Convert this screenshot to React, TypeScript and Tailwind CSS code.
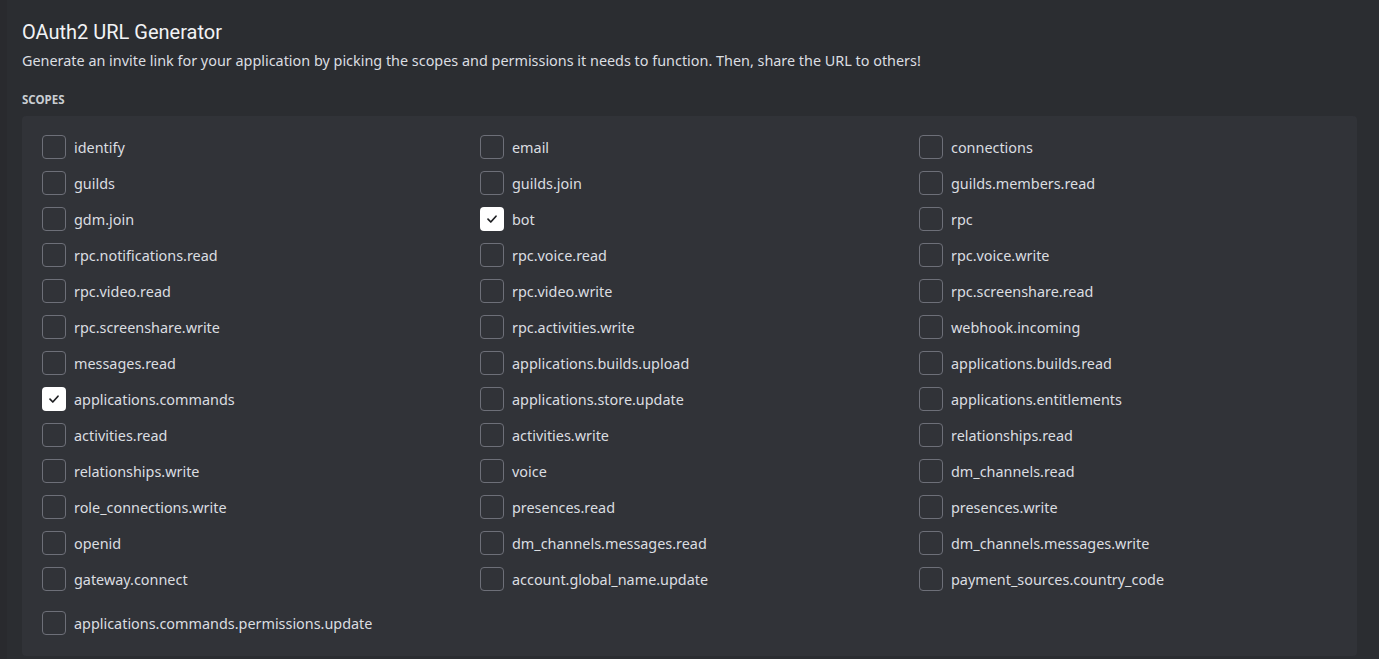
import React from "react";

const rows: string[][] = [
  ["identify", "email", "connections"],
  ["guilds", "guilds.join", "guilds.members.read"],
  ["gdm.join", "bot", "rpc"],
  ["rpc.notifications.read", "rpc.voice.read", "rpc.voice.write"],
  ["rpc.video.read", "rpc.video.write", "rpc.screenshare.read"],
  ["rpc.screenshare.write", "rpc.activities.write", "webhook.incoming"],
  ["messages.read", "applications.builds.upload", "applications.builds.read"],
  ["applications.commands", "applications.store.update", "applications.entitlements"],
  ["activities.read", "activities.write", "relationships.read"],
  ["relationships.write", "voice", "dm_channels.read"],
  ["role_connections.write", "presences.read", "presences.write"],
  ["openid", "dm_channels.messages.read", "dm_channels.messages.write"],
  ["gateway.connect", "account.global_name.update", "payment_sources.country_code"],
];

const checked = new Set(["bot", "applications.commands"]);

function Item({ label }: { label: string }) {
  const on = checked.has(label);
  return (
    <div className="flex items-center h-6 gap-2">
      {on ? (
        <div className="w-6 h-6 rounded-[4px] bg-white flex items-center justify-center shrink-0">
          <svg width="14" height="14" viewBox="0 0 14 14" fill="none">
            <path d="M3 7.2 L5.8 10 L11 4.2" stroke="#1e1f22" strokeWidth="1.7" strokeLinecap="round" strokeLinejoin="round" />
          </svg>
        </div>
      ) : (
        <div className="w-6 h-6 rounded-[4px] border border-[#6d6f78] shrink-0" />
      )}
      <span className="text-[14.4px] text-[#dbdee1] leading-6 pt-px">{label}</span>
    </div>
  );
}

export default function App() {
  return (
    <div
      className="w-[1379px] h-[659px] bg-[#2b2d31] overflow-hidden border-l-[7px] border-[#292a2e] pl-[15px] pr-[22px] pt-[20px]"
      style={{ fontFamily: '"Noto Sans", "Open Sans", sans-serif' }}
    >
      <h1
        className="text-[20px] leading-6 text-[#f2f3f5] font-normal"
        style={{ fontFamily: 'Roboto, "Noto Sans", sans-serif' }}
      >
        OAuth2 URL Generator
      </h1>
      <p className="text-[14.4px] leading-5 text-[#dbdee1] mt-[7px]">
        Generate an invite link for your application by picking the scopes and permissions it needs to function. Then, share the URL to others!
      </p>
      <div className="text-[11.5px] font-bold text-[#c9cdd2] uppercase mt-[23px] leading-3">Scopes</div>
      <div className="mt-[10px] bg-[#313338] rounded-[4px] pl-[20px] pt-[19px] pb-[21px]">
        <div className="grid grid-cols-[438px_439px_1fr] gap-y-3">
          {rows.map((r) =>
            r.map((l) => <Item key={l} label={l} />)
          )}
        </div>
        <div className="mt-5">
          <Item label="applications.commands.permissions.update" />
        </div>
      </div>
    </div>
  );
}
